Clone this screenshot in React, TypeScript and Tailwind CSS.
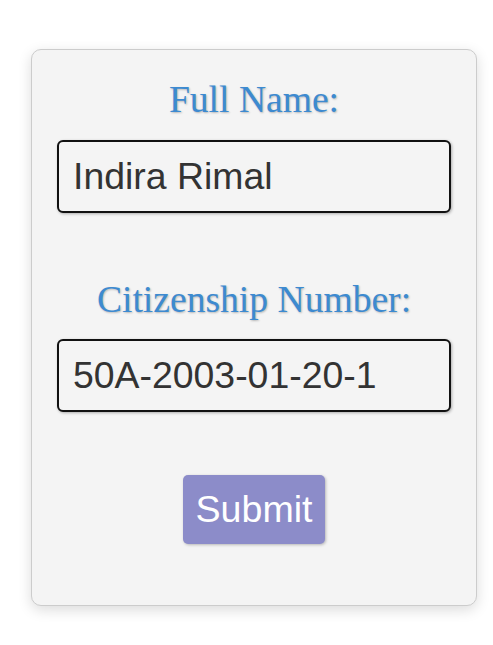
import { useState } from "react";

const labelCls =
  "block text-center text-[37.6px] leading-[41px] text-[#3d8ad0] [font-family:'Liberation_Serif',serif] [text-shadow:1px_1px_2px_rgba(0,0,0,0.25)]";

const inputCls =
  "block w-full h-[73px] px-[14px] rounded-md border-2 border-[#111] bg-[#f4f4f4] text-[37.4px] text-[#333] outline-none shadow-[1px_1px_3px_rgba(0,0,0,0.3)] [font-family:'Liberation_Sans',Arial,sans-serif]";

const App = () => {
  const [name, setName] = useState("Indira Rimal");
  const [citizenship, setCitizenship] = useState("50A-2003-01-20-1");

  return (
    <div className="min-h-screen bg-white pt-[49px] pl-[31px]">
      <form
        onSubmit={e => e.preventDefault()}
        className="w-[446px] h-[557px] flex flex-col px-[25px] pt-[29px] bg-[#f4f4f4] border border-[#ccc] rounded-[10px] shadow-[0_4px_14px_rgba(0,0,0,0.14)]"
      >
        <label htmlFor="name" className={labelCls}>
          Full Name:
        </label>
        <input
          id="name"
          autoFocus
          spellCheck
          className={inputCls + " mt-[20px]"}
          value={name}
          onChange={e => setName(e.target.value)}
        />
        <label htmlFor="cit" className={labelCls + " mt-[66px]"}>
          Citizenship Number:
        </label>
        <input
          id="cit"
          className={inputCls + " mt-[19px]"}
          value={citizenship}
          onChange={e => setCitizenship(e.target.value)}
        />
        <div className="flex justify-center mt-[63px]">
          <button
            type="submit"
            className="h-[69px] px-[13px] rounded-[5px] bg-[#8c8cc9] text-white text-[37.6px] shadow-[1px_1px_3px_rgba(0,0,0,0.25)] [font-family:'Liberation_Sans',Arial,sans-serif]"
          >
            Submit
          </button>
        </div>
      </form>
    </div>
  );
};

export default App;
